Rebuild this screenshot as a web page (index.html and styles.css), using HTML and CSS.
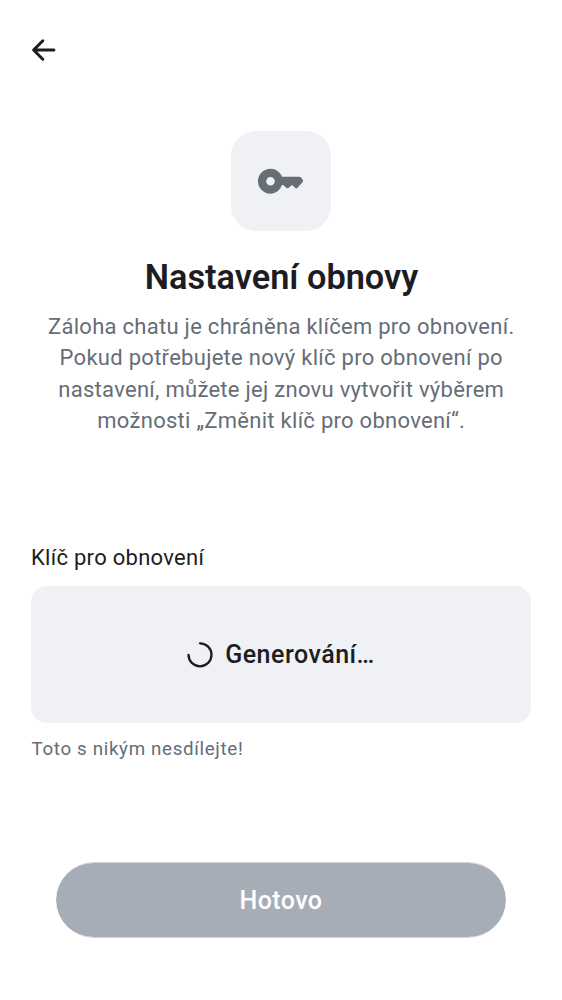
FILE: index.html
```html
<!DOCTYPE html>
<html lang="cs">
<head>
<meta charset="utf-8">
<title>Nastavení obnovy</title>
<link rel="stylesheet" href="styles.css">
</head>
<body>
<main class="screen">
  <header class="topbar">
    <button class="back" aria-label="Zpět"><svg width="26" height="26" viewBox="0 0 26 26"><path d="M22.900 13H3.200M11.800 3.800 2.600 13l9.200 9.200" fill="none" stroke="currentColor" stroke-width="3" stroke-linecap="round" stroke-linejoin="round"/></svg></button>
  </header>
  <section class="intro">
    <div class="tile"><svg width="50" height="50" viewBox="0 0 50 50"><path fill="currentColor" fill-rule="evenodd" d="M14.500 12.700c5.200 0 9.600 3.200 11.500 8.100h17.600q.9 0 1.500.6l1.700 2.400q.8 1.200-.1 2.300l-5.400 5.800q-.9.900-1.900.1l-3.400-2.900-3.600 2.900q-.9.700-1.800 0l-3.400-3h-1.300C24.200 34.200 19.700 37.700 14.500 37.700a12.500 12.500 0 0 1 0-25ZM14.500 20.900a4.300 4.300 0 1 0 0 8.600 4.300 4.300 0 0 0 0-8.600Z"/></svg></div>
    <h1 class="title">Nastavení obnovy</h1>
    <p class="lead">Záloha chatu je chráněna klíčem pro obnovení.<br>Pokud potřebujete nový klíč pro obnovení po<br>nastavení, můžete jej znovu vytvořit výběrem<br>možnosti „Změnit klíč pro obnovení“.</p>
  </section>
  <section class="field">
    <h2 class="label">Klíč pro obnovení</h2>
    <div class="keybox">
      <svg width="26" height="26" viewBox="0 0 26 26"><path d="M13 1.300A11.500 11.500 0 1 1 1.500 12.800" fill="none" stroke="currentColor" stroke-width="2.300" stroke-linecap="round"/></svg>
      <span>Generování…</span>
    </div>
    <p class="hint">Toto s nikým nesdílejte!</p>
  </section>
  <footer class="footer"><button class="done" disabled>Hotovo</button></footer>
</main>
</body>
</html>
```
FILE: styles.css
```css
* { box-sizing: border-box; }
body { margin: 0; background: #fff; color: #1b1d22; font-family: Roboto, sans-serif; }
h1, h2, p { margin: 0; }
button { border: 0; padding: 0; font: inherit; }
svg { display: block; flex: none; }
.screen { height: 1000px; display: flex; flex-direction: column; padding: 0 31px 62px; }
.topbar { height: 131px; padding-top: 37px; }
.back { background: none; color: #1b1d22; }
.intro { display: flex; flex-direction: column; align-items: center; text-align: center; white-space: nowrap; }
.tile { width: 100px; height: 100px; border-radius: 25px; background: #f0f1f5; color: #656d77; display: grid; place-items: center; }
.title { margin-top: 25px; padding-left: 1px; font-size: 34.3px; line-height: 42px; font-weight: 600; }
.lead { margin-top: 13px; padding-left: .5px; font-size: 22px; line-height: 31.25px; letter-spacing: .28px; color: #656d77; }
.field { margin-top: 106px; }
.label { font-size: 22px; line-height: 31px; font-weight: 400; letter-spacing: .28px; }
.keybox { margin-top: 13px; height: 137px; border-radius: 16px; background: #f0f1f5; display: flex; align-items: center; justify-content: center; gap: 12px; font-size: 25px; font-weight: 500; letter-spacing: .5px; }
.hint { margin-top: 14px; padding-left: .5px; font-size: 18.75px; line-height: 25px; letter-spacing: .66px; color: #656d77; }
.footer { margin-top: auto; padding: 0 25px; }
.done { display: block; width: 100%; height: 76px; border: solid rgba(166, 173, 183, .5); border-width: 1px 0; border-radius: 38px; background: #a6adb7 padding-box; color: #fff; font-size: 25px; font-weight: 500; letter-spacing: .42px; }
```
